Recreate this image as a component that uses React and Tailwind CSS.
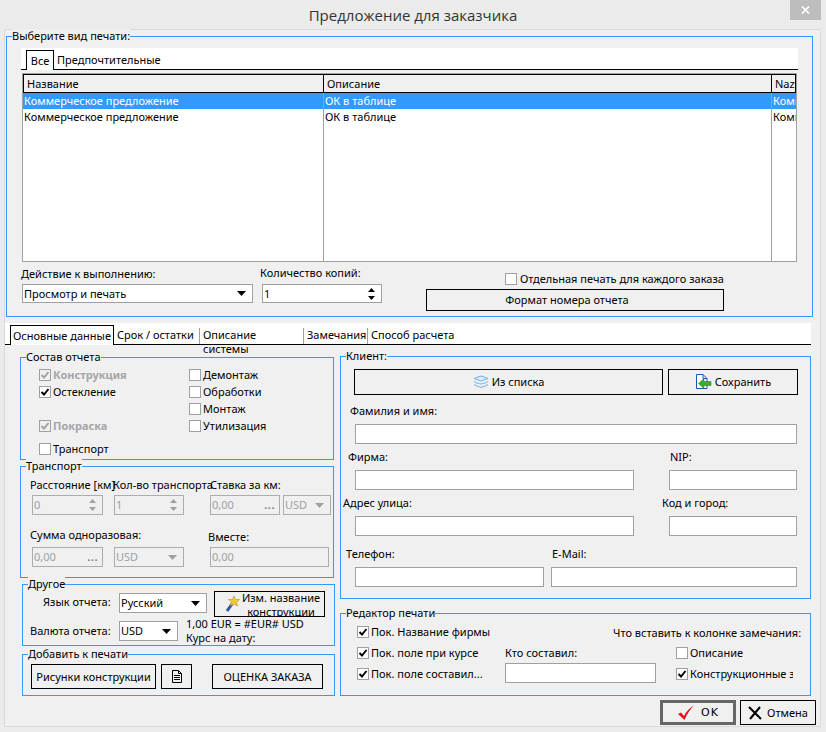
import React from "react";

const Tri = ({ up = false, color = "#000", className = "" }) => (
  <svg width="9" height="5" viewBox="0 0 9 5" className={className}>
    <polygon points={up ? "4.5,0 9,5 0,5" : "0,0 9,0 4.5,5"} fill={color} />
  </svg>
);

const Group = ({ title, className = "", children }) => (
  <div className={`relative box-border border border-[#3399ff] ${className}`}>
    <span className="absolute left-[5px] top-[-8px] bg-[#f0f0f0] leading-[14px] whitespace-nowrap">{title}</span>
    {children}
  </div>
);

const Check = ({ checked, disabled, bold, label, className = "" }) => (
  <div className={`flex h-[17px] items-center gap-[2px] whitespace-nowrap ${className}`}>
    <span className={`box-border flex h-[12px] w-[12px] shrink-0 items-center justify-center border border-[#a0a0a0] ${disabled ? "bg-[#f0f0f0]" : "bg-white"}`}>
      {checked && (
        <svg width="10" height="10" viewBox="0 0 10 10">
          <path d="M1.5 5 L4 7.5 L8.5 2" fill="none" stroke={disabled ? "#a0a0a0" : "#000"} strokeWidth="1.9" />
        </svg>
      )}
    </span>
    <span className={`${disabled ? "text-[#a6a6a6]" : ""} ${bold ? "font-bold" : ""}`}>{label}</span>
  </div>
);

const Field = ({ className = "", value = "", disabled, children }) => (
  <div className={`box-border flex h-[20px] items-center justify-between overflow-hidden border ${disabled ? "border-[#adadad] bg-[#f0f0f0] text-[#a0a0a0]" : "border-[#a0a0a0] bg-white"} ${className}`}>
    <span className="pl-[1px] whitespace-nowrap">{value}</span>
    {children}
  </div>
);

const Spin = ({ disabled }) => (
  <span className="mr-[6px] flex flex-col gap-[4px]">
    <Tri up color={disabled ? "#a0a0a0" : "#000"} className="h-[4px] w-[7px]" />
    <Tri color={disabled ? "#a0a0a0" : "#000"} className="h-[4px] w-[7px]" />
  </span>
);

const Drop = ({ disabled }) => (
  <span className="mr-[6px] flex items-center">
    <Tri color={disabled ? "#a0a0a0" : "#000"} />
  </span>
);

const Dots = () => <span className="mr-[4px] text-[#808080] font-bold leading-[10px] tracking-[0.5px]">...</span>;

const Btn = ({ className = "", children }) => (
  <div className={`box-border flex items-center justify-center overflow-hidden border border-black bg-[#f0f0f0] ${className}`}>{children}</div>
);

const Row = ({ sel, a, b, c }) => (
  <div className={`flex h-[16px] leading-[15px] ${sel ? "bg-[#3399ff] text-white" : "bg-white"}`}>
    <div className="w-[301px] border-r border-[#a0a0a0] pl-[1px]">{a}</div>
    <div className="w-[448px] border-r border-[#a0a0a0] pl-[1px]">{b}</div>
    <div className="flex-1 overflow-hidden pl-[1px] whitespace-nowrap">{c}</div>
  </div>
);

export default function App() {
  return (
    <div className="h-[732px] w-[826px] overflow-hidden bg-[#ebebeb] text-[11px] leading-[14px] text-black [font-family:'Noto_Sans',sans-serif]">
      <div className="grid h-[29px] grid-cols-[1fr_auto_1fr]">
        <div />
        <div className="pt-[5px] text-[15px] leading-[20px] text-[#333] [font-family:'Open_Sans',sans-serif]">Предложение для заказчика</div>
        <div className="flex justify-end pr-[5px]">
          <div className="flex h-[20px] w-[31px] items-center justify-center bg-[#bdbdbd]">
            <svg width="9" height="8" viewBox="0 0 9 8"><path d="M1 0.5 L8 7.5 M8 0.5 L1 7.5" stroke="#fff" strokeWidth="1.6" /></svg>
          </div>
        </div>
      </div>

      <div className="mx-[4px] box-border h-[698px] w-[817px] border border-[#d9d9d9] bg-[#f0f0f0]">
        {/* top group */}
        <Group title="Выберите вид печати:" className="mt-[6px] ml-[1px] h-[281px] w-[807px]">
          <div className="mt-[11px] ml-[14px] box-border flex h-[22px] w-[777px] border-b border-black bg-white pl-[5px]">
            <div className="mt-[2px] box-border h-[20px] w-[28px] border border-b-0 border-black bg-white pt-[3px] text-center">Все</div>
            <div className="pt-[5px] pl-[3px]">Предпочтительные</div>
          </div>
          <div className="mt-[3px] ml-[15px] box-border flex h-[189px] w-[775px] flex-col border border-[#a0a0a0] bg-white">
            <div className="box-border flex h-[19px] shrink-0 border border-black bg-[#f0f0f0] pt-[2px]">
              <div className="-mt-[2px] w-[300px] border-r border-black pt-[2px] pl-[3px]">Название</div>
              <div className="-mt-[2px] w-[448px] border-r border-black pt-[2px] pl-[3px]">Описание</div>
              <div className="flex-1 overflow-hidden pl-[3px]">Nazwa</div>
            </div>
            <Row sel a="Коммерческое предложение" b="ОК в таблице" c="Коммерческое" />
            <Row a="Коммерческое предложение" b="ОК в таблице" c="Коммерческое" />
            <div className="flex flex-1">
              <div className="w-[301px] border-r border-[#a0a0a0]" />
              <div className="w-[448px] border-r border-[#a0a0a0]" />
            </div>
          </div>
          <div className="flex pl-[14px]">
            <div className="w-[239px] pt-[5px]">
              <div>Действие к выполнению:</div>
              <Field className="mt-[3px] ml-[1px] !h-[19px] w-[231px]" value="Просмотр и печать"><Drop /></Field>
            </div>
            <div className="w-[166px] pt-[4px]">
              <div>Количество копий:</div>
              <Field className="mt-[4px] ml-[2px] !h-[19px] w-[120px]" value="1"><Spin /></Field>
            </div>
            <div className="pt-[8px]">
              <Check className="ml-[79px] gap-[3px]" label="Отдельная печать для каждого заказа" />
              <Btn className="mt-[2px] h-[22px] w-[298px] pr-[16px]">Формат номера отчета</Btn>
            </div>
          </div>
        </Group>

        {/* tab strip */}
        <div className="mt-[6px] box-border flex h-[22px] w-[806px] border-b border-black bg-white pl-[5px]">
          <div className="mt-[2px] box-border h-[20px] w-[104px] border border-b-0 border-black bg-white pt-[3px] text-center">Основные данные</div>
          <div className="flex pt-[5px]">
            <div className="w-[86px] border-r border-[#a0a0a0] pl-[3px]">Срок / остатки</div>
            <div className="w-[104px] border-r border-[#a0a0a0] pl-[3px]">Описание системы</div>
            <div className="w-[64px] border-r border-[#a0a0a0] pl-[3px]">Замечания</div>
            <div className="pl-[3px]">Способ расчета</div>
          </div>
        </div>

        <div className="mt-[11px] flex">
          {/* left column */}
          <div className="mt-[1px] ml-[15px] w-[315px]">
            <Group title="Состав отчета" className="h-[103px] w-[314px]">
              <div className="flex pt-[8px] pl-[18px]">
                <div className="w-[150px]">
                  <Check checked disabled bold label="Конструкция" />
                  <Check checked label="Остекление" />
                  <div className="h-[17px]" />
                  <Check checked disabled bold label="Покраска" />
                  <Check className="mt-[6px]" label="Транспорт" />
                </div>
                <div>
                  <Check label="Демонтаж" />
                  <Check label="Обработки" />
                  <Check label="Монтаж" />
                  <Check label="Утилизация" />
                </div>
              </div>
            </Group>

            <Group title="Транспорт" className="mt-[6px] h-[112px] w-[314px]">
              <div className="flex pt-[11px] pl-[9px] whitespace-nowrap">
                <div className="w-[83px]">Расстояние [км]</div>
                <div className="w-[97px]">Кол-во транспорта</div>
                <div>Ставка за км:</div>
              </div>
              <div className="mt-[3px] flex pl-[11px]">
                <Field disabled className="w-[71px]" value="0"><Spin disabled /></Field>
                <Field disabled className="ml-[11px] w-[70px]" value="1"><Spin disabled /></Field>
                <Field disabled className="ml-[26px] w-[70px]" value="0,00"><Dots /></Field>
                <Field disabled className="ml-[3px] w-[48px]" value="USD"><Drop disabled /></Field>
              </div>
              <div className="mt-[13px] flex h-[19px] pl-[9px] whitespace-nowrap">
                <div className="w-[178px]">Сумма одноразовая:</div>
                <div className="pt-[2px]">Вместе:</div>
              </div>
              <div className="flex pl-[11px]">
                <Field disabled className="w-[71px]" value="0,00"><Dots /></Field>
                <Field disabled className="ml-[11px] w-[70px]" value="USD"><Drop disabled /></Field>
                <Field disabled className="ml-[26px] w-[119px]" value="0,00" />
              </div>
            </Group>

            <Group title="Другое" className="mt-[6px] ml-[2px] h-[62px] w-[313px]">
              <div className="flex pt-[6px]">
                <div className="mt-[4px] w-[96px] pl-[20px]">Язык отчета:</div>
                <Field className="mt-[2px] w-[88px]" value="Русский"><Drop /></Field>
                <Btn className="ml-[7px] h-[26px] w-[111px] gap-[2px] pl-[5px]">
                  <svg width="16" height="18" viewBox="0 0 16 18" className="shrink-0">
                    <path d="M3 16 L8 9" stroke="#2a55a8" strokeWidth="3" />
                    <polygon points="10,1 11.5,4.5 15.5,4.5 12.5,7.5 13.5,11 10,9 6.5,11 7.5,7 4.5,4.5 8.5,4.5" fill="#f5c93a" stroke="#b98b16" strokeWidth="0.6" />
                  </svg>
                  <div className="pt-[1px] text-center leading-[14px]">Изм. название<br />конструкции</div>
                </Btn>
              </div>
              <div className="flex">
                <div className="mt-[7px] w-[96px] pl-[7px]">Валюта отчета:</div>
                <Field className="mt-[4px] w-[59px]" value="USD"><Drop /></Field>
                <div className="ml-[8px] whitespace-nowrap">1,00 EUR = #EUR# USD<br />Курс на дату:</div>
              </div>
            </Group>

            <Group title="Добавить к печати" className="mt-[8px] ml-[2px] h-[42px] w-[313px]">
              <div className="flex pt-[9px] pl-[8px]">
                <Btn className="h-[25px] w-[125px]">Рисунки конструкции</Btn>
                <Btn className="ml-[5px] h-[25px] w-[31px]">
                  <svg width="10" height="13" viewBox="0 0 10 13">
                    <path d="M0.5 0.5 H6.5 L9.5 3.5 V12.5 H0.5 Z M6.5 0.5 V3.5 H9.5 M2 5.5 H8 M2 7.5 H8 M2 9.5 H8" fill="none" stroke="#000" />
                  </svg>
                </Btn>
                <Btn className="ml-[20px] h-[25px] w-[111px]">ОЦЕНКА ЗАКАЗА</Btn>
              </div>
            </Group>
          </div>

          {/* right column */}
          <div className="ml-[5px] w-[471px]">
            <Group title="Клиент:" className="h-[243px] w-[471px]">
              <div className="flex pt-[12px] pl-[13px]">
                <Btn className="h-[26px] w-[309px] gap-[3px]">
                  <svg width="16" height="14" viewBox="0 0 16 14" fill="none" stroke="#6fb0ee" strokeWidth="1">
                    <path d="M1 3.5 L8 1 L15 3.5 L8 6 Z" fill="#dcecfb" />
                    <path d="M1 6.5 C4 8.5 6 8.5 8 9 C10 8.5 12 8.5 15 6.5" />
                    <path d="M1 9.5 C4 11.5 6 11.5 8 12.5 C10 11.5 12 11.5 15 9.5" />
                  </svg>
                  Из списка
                </Btn>
                <Btn className="ml-[5px] h-[26px] w-[130px] gap-[3px]">
                  <svg width="17" height="16" viewBox="0 0 17 16">
                    <path d="M1.5 0.5 H8 L12 4.5 V14.5 H1.5 Z M8 0.5 V4.5 H12" fill="#fff" stroke="#1a55b0" />
                    <polygon points="3.5,9.5 9,4.5 9,7.5 16,7.5 16,11.5 9,11.5 9,14.5" fill="#3cb020" stroke="#1f7a10" strokeWidth="0.5" />
                  </svg>
                  Сохранить
                </Btn>
              </div>
              <div className="mt-[9px] pl-[9px]">Фамилия и имя:</div>
              <Field className="mt-[6px] ml-[14px] w-[442px]" />
              <div className="mt-[6px] flex pl-[7px]">
                <div className="w-[322px]">Фирма:</div>
                <div>NIP:</div>
              </div>
              <div className="mt-[6px] flex pl-[14px]">
                <Field className="w-[279px]" />
                <Field className="ml-[35px] w-[128px]" />
              </div>
              <div className="mt-[6px] flex pl-[2px]">
                <div className="w-[319px]">Адрес улица:</div>
                <div>Код и город:</div>
              </div>
              <div className="mt-[6px] flex pl-[14px]">
                <Field className="w-[279px]" />
                <Field className="ml-[35px] w-[128px]" />
              </div>
              <div className="mt-[11px] flex pl-[5px]">
                <div className="w-[206px]">Телефон:</div>
                <div>E-Mail:</div>
              </div>
              <div className="mt-[6px] flex pl-[14px]">
                <Field className="w-[189px]" />
                <Field className="ml-[7px] w-[246px]" />
              </div>
            </Group>

            <Group title="Редактор печати" className="mt-[14px] h-[83px] w-[471px]">
              <div className="flex pl-[16px]">
                <div className="w-[148px] pt-[9px]">
                  <Check checked label="Пок. Название фирмы" />
                  <Check checked className="mt-[4px]" label="Пок. поле при курсе" />
                  <Check checked className="mt-[4px]" label="Пок. поле составил..." />
                </div>
                <div className="w-[151px] pt-[32px]">
                  <div>Кто составил:</div>
                  <Field className="mt-[3px]" />
                </div>
                <div className="ml-[20px] w-[117px] pt-[12px]">
                  <div className="-ml-[63px] whitespace-nowrap">Что вставить к колонке замечания:</div>
                  <Check className="mt-[4px]" label="Описание" />
                  <div className="overflow-hidden">
                    <Check checked className="mt-[4px]" label="Конструкционные замечания" />
                  </div>
                </div>
              </div>
            </Group>
          </div>
        </div>

        <div className="mt-[4px] flex justify-end gap-[4px] pr-[4px]">
          <Btn className="h-[25px] w-[76px] gap-[6px] !border-[3px] !border-[#666]">
            <svg width="18" height="16" viewBox="0 0 18 16"><path d="M1 9 L4 7.5 L7 11 C9 7 12 3 17 0.5 C13 4.5 10 9 7.5 15 Z" fill="#e8101c" /></svg>
            <span className="tracking-[1px] [font-family:'DejaVu_Sans',sans-serif]">OK</span>
          </Btn>
          <Btn className="h-[25px] w-[76px] gap-[5px]">
            <svg width="14" height="14" viewBox="0 0 14 14"><path d="M1 1 L13 13 M12 1 L2 13" stroke="#000" strokeWidth="2" /></svg>
            Отмена
          </Btn>
        </div>
      </div>
    </div>
  );
}
